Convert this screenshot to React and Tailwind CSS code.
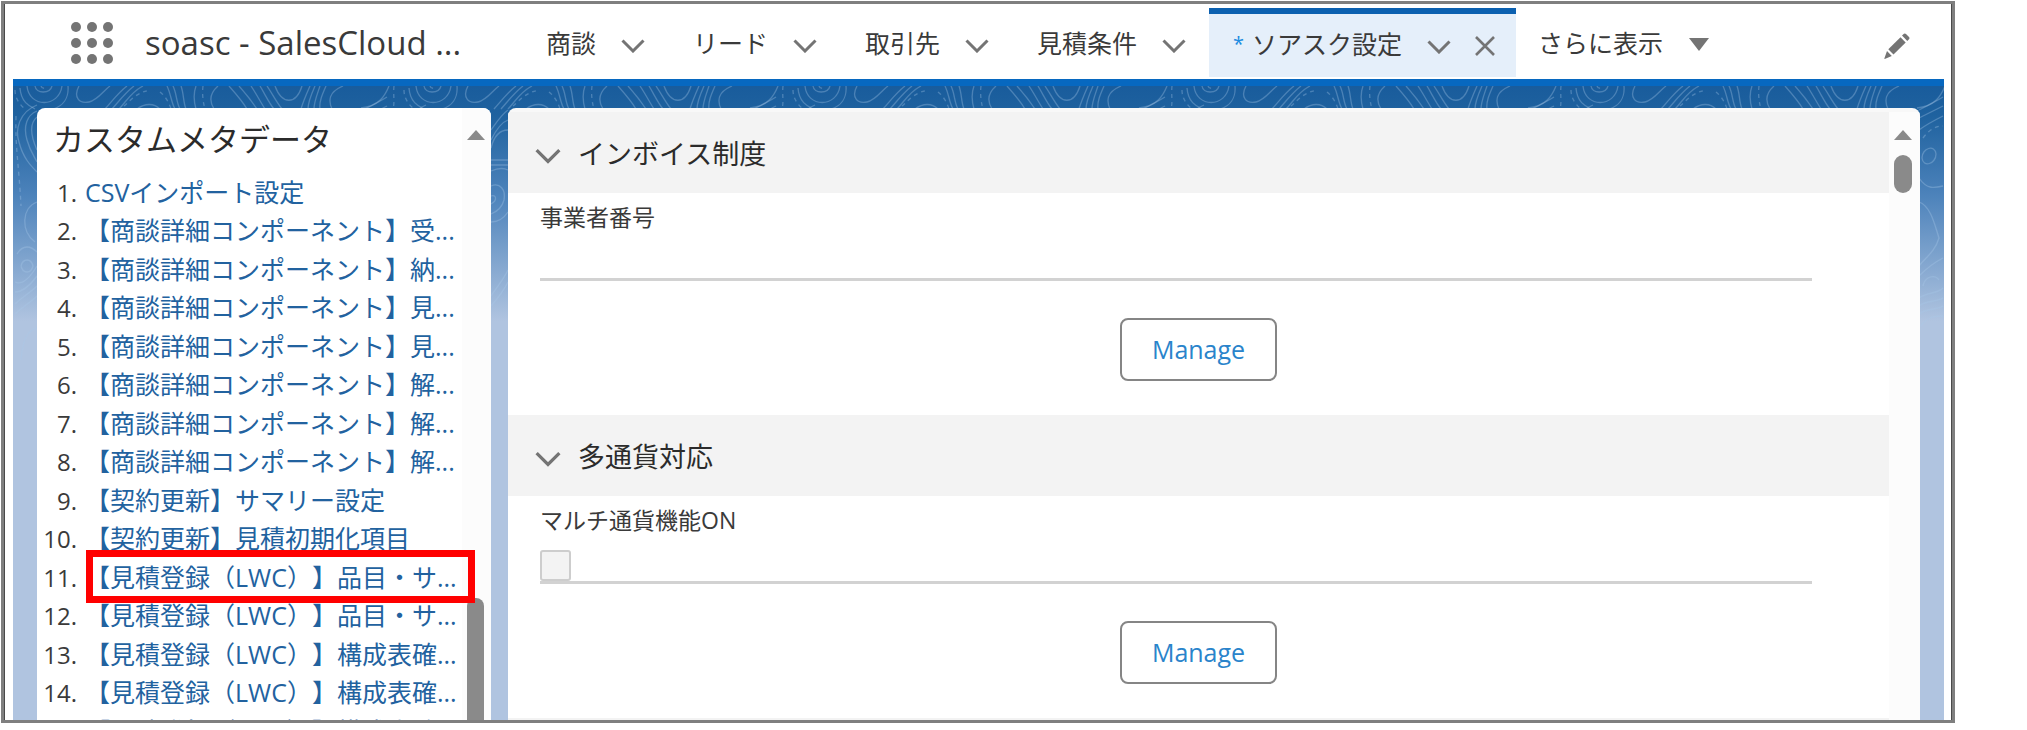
import React from "react";

const tabs = ["商談", "リード", "取引先", "見積条件"];

const metadata = [
  "CSVインポート設定",
  "【商談詳細コンポーネント】受...",
  "【商談詳細コンポーネント】納...",
  "【商談詳細コンポーネント】見...",
  "【商談詳細コンポーネント】見...",
  "【商談詳細コンポーネント】解...",
  "【商談詳細コンポーネント】解...",
  "【商談詳細コンポーネント】解...",
  "【契約更新】サマリー設定",
  "【契約更新】見積初期化項目",
  "【見積登録（LWC）】品目・サ...",
  "【見積登録（LWC）】品目・サ...",
  "【見積登録（LWC）】構成表確...",
  "【見積登録（LWC）】構成表確...",
  "【見積登録（LWC）】構成表確...",
];

const contours = [
  "M22 0C23 8 37 8 39 0",
  "M14 0C16 22 46 22 49 0",
  "M7 2C8 16 16 20 22 23M40 23C50 20 56 12 55 0",
  "M66 0C60 11 66 18 76 16C85 14 90 5 97 0",
  "M92 23C100 14 106 6 114 0",
  "M99 23C107 14 112 7 121 0",
  "M106 23C113 16 118 6 130 0",
  "M124 23C132 17 141 17 147 23",
  "M154 0C158 8 158 16 162 23",
  "M160 0C164 8 163 16 167 23",
  "M168 0C171 8 170 16 173 23",
  "M183 0C180 8 181 16 183 23",
  "M205 0C197 7 196 15 201 23",
  "M216 0C224 9 230 16 234 23",
  "M226 0C234 9 240 17 244 23",
  "M238 0C244 9 248 17 252 23",
  "M247 0C253 10 256 17 261 23",
  "M254 0C260 9 264 17 269 23",
  "M262 0C269 19 283 19 289 0",
  "M297 0C293 9 290 16 288 23",
  "M302 0C298 9 295 16 295 23",
  "M307 0C304 9 301 16 301 23",
  "M313 0C309 9 306 16 307 23",
  "M330 0C316 6 315 14 319 23",
  "M348 22C366 20 372 10 376 0",
  "M24 25C14 29 10 40 14 54C17 65 21 70 24 76",
  "M24 31C18 36 16 46 24 64",
  "M24 19C6 26 2 44 6 56C10 72 18 80 24 86",
  "M24 116C8 122 8 146 22 156",
  "M4 168C10 158 18 160 24 166",
  "M8 180C10 172 18 172 20 180C18 188 10 188 8 180",
  "M2 196C10 200 18 190 24 180",
  "M2 206C10 206 18 198 24 190",
  "M2 218C8 212 18 206 24 200",
  "M2 228C8 222 18 216 24 210",
  "M8 274C10 250 16 244 24 242",
  "M89 44C96 34 100 28 106 24",
  "M89 54C95 42 100 36 106 34",
  "M89 62C92 50 98 44 106 44",
  "M89 74H106M89 79H106M89 85C96 82 102 82 106 84",
  "M89 100C98 96 104 104 102 114C100 122 94 126 89 128",
  "M89 110C94 108 96 114 89 118",
  "M89 136C96 136 102 132 106 126",
  "M89 210C94 202 100 196 106 184",
  "M89 220C96 212 102 204 106 196",
  "M350 24C358 20 366 16 374 11",
  "M350 32C358 28 366 24 374 20",
  "M350 44C358 38 366 34 374 30",
  "M353 72C353 62 366 58 367 68C367 78 354 82 353 72Z",
  "M350 92C358 104 366 102 374 100",
  "M350 116C362 120 366 140 370 152C366 166 356 172 350 180",
  "M350 190C358 182 366 176 374 172",
  "M354 200C356 190 366 188 370 194",
  "M350 212C358 206 368 208 374 202",
  "M350 220C358 214 368 216 374 212",
  "M350 228C358 222 368 224 374 220",
  "M352 240C358 230 368 230 374 230",
];

const dashes = [
  "M28 0C29 3 33 3 34 0",
  "M2 4C2 12 6 18 12 23",
  "M111 20C118 14 124 6 138 4",
  "M190 0C189 8 190 16 192 23",
  "M147 6C152 10 156 16 158 23",
  "M381 0C380 8 382 16 380 23",
  "M3 30C2 60 6 80 8 120",
  "M354 52C360 44 366 40 374 40",
];

function Topography() {
  return (
    <svg className="absolute inset-0 h-full w-full" aria-hidden="true">
      <defs>
        <pattern id="topo" width="389" height="300" patternUnits="userSpaceOnUse">
          <g fill="none" stroke="#a9c8e8" strokeOpacity="0.34" strokeWidth="1.3">
            {contours.map((d) => (
              <path key={d} d={d} />
            ))}
            {dashes.map((d) => (
              <path key={d} d={d} strokeDasharray="4 4" />
            ))}
          </g>
        </pattern>
      </defs>
      <rect width="100%" height="300" fill="url(#topo)" />
    </svg>
  );
}

function Chevron({ className }) {
  return (
    <svg viewBox="0 0 24 14" className={className} fill="none" stroke="currentColor" strokeWidth="3" aria-hidden="true">
      <path d="M1.5 1.5L12 12L22.5 1.5" />
    </svg>
  );
}

function ScrollUp() {
  return (
    <svg viewBox="0 0 18 10" className="h-[10px] w-[18px] shrink-0 text-[#8a8a8a]" fill="currentColor" aria-hidden="true">
      <path d="M9 0L18 10H0Z" />
    </svg>
  );
}

function Tab({ label }) {
  return (
    <div className="flex items-center pt-0.5">
      <a href="#" className="text-[25px] leading-9">{label}</a>
      <button type="button" aria-label={`${label} メニュー`} className="ml-[25px] mt-1.5 text-[#747474]">
        <Chevron className="h-[14px] w-6" />
      </button>
    </div>
  );
}

function Section({ title, children }) {
  return (
    <section className="flex shrink-0 flex-col">
      <h2 className="bg-[#f3f3f3]">
        <button type="button" className="flex h-[81px] w-full items-center gap-[17px] pt-1 pl-[27px] text-[27px] text-[#2b2b2b]">
          <Chevron className="mt-0.5 h-4 w-[26px] text-[#747474]" />
          {title}
        </button>
      </h2>
      <div className="flex h-[222px] flex-col">
        <div className="flex flex-col pr-[77px] pl-8">{children}</div>
        <button
          type="button"
          className="mt-[37px] h-[63px] w-[157px] self-center rounded-lg border-2 border-[#858585] text-[25px] text-[#2a84cb]"
        >
          Manage
        </button>
      </div>
    </section>
  );
}

export default function App() {
  return (
    <div className="h-screen bg-white pt-px pr-[72px] pb-[7px] pl-px font-['Open_Sans','Noto_Sans_CJK_JP',sans-serif] text-[#3a3a3a] [text-spacing-trim:space-all]">
      <div className="flex h-full flex-col overflow-hidden border-[3px] border-[#7f7f7f] bg-white">
        <div className="flex min-h-0 flex-1 flex-col border-x border-[#4a4a4a] pr-[7px] pl-2">
          <header className="flex h-[75px] shrink-0 items-stretch pr-[34px] pl-[58px]">
            <div className="flex w-[475px] items-center gap-8 pt-0.5">
              <button type="button" aria-label="アプリケーションランチャー" className="text-[#747474]">
                <svg viewBox="0 0 42 42" className="h-[42px] w-[42px]" fill="currentColor" aria-hidden="true">
                  {[5, 21, 37].map((y) => [5, 21, 37].map((x) => <circle key={`${x}-${y}`} cx={x} cy={y} r="5" />))}
                </svg>
              </button>
              <h1 className="text-[33px] leading-10">soasc - SalesCloud ...</h1>
            </div>
            <nav className="flex items-stretch gap-12">
              {tabs.map((label) => (
                <Tab key={label} label={label} />
              ))}
              <div className="-ml-[25px] mt-1 mb-0.5 flex items-center border-t-[6px] border-[#0b60b0] bg-[#e5effa] pr-[21px] pb-1 pl-6">
                <span className="mr-2 text-[20px] text-[#1b8be0]">*</span>
                <a href="#" aria-current="page" className="text-[25px] leading-9">ソアスク設定</a>
                <button type="button" aria-label="ソアスク設定 メニュー" className="ml-[25px] mt-1.5 text-[#747474]">
                  <Chevron className="h-[14px] w-6" />
                </button>
                <button type="button" aria-label="閉じる" className="ml-6 mt-1 text-[#747474]">
                  <svg viewBox="0 0 20 20" className="h-5 w-5" fill="none" stroke="currentColor" strokeWidth="2.6" aria-hidden="true">
                    <path d="M1 1L19 19M19 1L1 19" />
                  </svg>
                </button>
              </div>
              <button type="button" className="-ml-[26px] flex items-center gap-[26px] pt-0.5 text-[25px] leading-9">
                さらに表示
                <svg viewBox="0 0 20 13" className="mt-1 h-[13px] w-5 text-[#747474]" fill="currentColor" aria-hidden="true">
                  <path d="M0 0H20L10 13Z" />
                </svg>
              </button>
            </nav>
            <button type="button" aria-label="編集" className="mt-2.5 ml-auto text-[#747474]">
              <svg viewBox="0 0 26 27" className="h-[27px] w-[26px]" fill="currentColor" aria-hidden="true">
                <path d="M18 2.6L20 .8Q21 0 22 1L25 4Q26 5 25.200 6L23.300 7.900Z" />
                <path d="M16.500 4.200L21.700 9.500L9.500 21.500L4.300 16.300Z" />
                <path d="M3 18L7.800 23L1.300 25.800Q0 26.400 .5 25Z" />
              </svg>
            </button>
          </header>
          <div className="h-[7px] shrink-0 bg-[#0768c0]" />
          <div className="relative min-h-0 flex-1 bg-[linear-gradient(#195c9c_0px,#1f629f_30px,#4d83bb_110px,#b0c4e0_235px)]">
            <Topography />
            <div className="relative flex h-full gap-[17px] px-6 pt-[22px]">
              <aside className="flex w-[454px] shrink-0 overflow-hidden rounded-t-lg bg-white">
                <div className="min-w-0 flex-1 pt-2">
                  <h2 className="pl-4 text-[31px] leading-[46px] text-[#2b2b2b]">カスタムメタデータ</h2>
                  <ol className="mt-[11px]">
                    {metadata.map((label, i) => (
                      <li key={i} className="relative flex items-center text-[25px] whitespace-nowrap odd:h-[39px] even:h-[38px]">
                        <span className="mr-2 w-10 shrink-0 text-right text-[24px]">{i + 1}.</span>
                        <a href="#" className="text-[#22629f]">{label}</a>
                        {i === 10 && (
                          <span className="absolute -top-2 left-[49px] z-10 h-[53px] w-[389px] border-[7px] border-[#ff0000]" />
                        )}
                      </li>
                    ))}
                  </ol>
                </div>
                <div className="flex w-[29px] flex-col items-center bg-[#fcfcfc] pt-[22px] pr-0.5">
                  <ScrollUp />
                  <div className="mt-[458px] w-[17px] flex-1 rounded-t-lg bg-[#8a8a8a]" />
                </div>
              </aside>
              <main className="flex min-w-0 flex-1 overflow-hidden rounded-t-lg bg-[#f8f8f8] pt-1">
                <div className="flex min-w-0 flex-1 flex-col overflow-hidden bg-white">
                  <Section title="インボイス制度">
                    <label htmlFor="business-number" className="mt-2 text-[23px] leading-8">事業者番号</label>
                    <input
                      id="business-number"
                      type="text"
                      className="mt-3 h-9 w-full border-b-[3px] border-[#d2d2d2] bg-transparent text-[23px] outline-none"
                    />
                  </Section>
                  <Section title="多通貨対応">
                    <label htmlFor="multi-currency" className="mt-2 text-[23px] leading-8">マルチ通貨機能ON</label>
                    <div className="mt-3 flex h-9 items-end border-b-[3px] border-[#d2d2d2]">
                      <input
                        id="multi-currency"
                        type="checkbox"
                        className="h-[31px] w-[31px] appearance-none rounded-[3px] border-2 border-[#cdcdcd] bg-[#f3f3f3]"
                      />
                    </div>
                  </Section>
                  <div className="flex-1 bg-[#f3f3f3]" />
                </div>
                <div className="flex w-[31px] flex-col items-center bg-[#fcfcfc] pt-[18px] pr-1">
                  <ScrollUp />
                  <div className="mt-[15px] h-[38px] w-[18px] rounded-full bg-[#8a8a8a]" />
                </div>
              </main>
            </div>
          </div>
        </div>
      </div>
    </div>
  );
}
